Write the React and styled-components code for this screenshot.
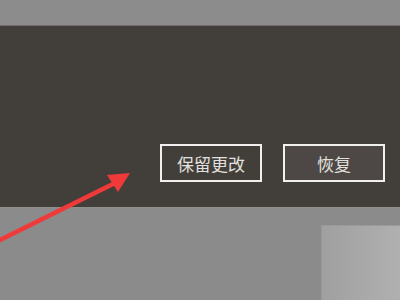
import React from "react";
import styled, { createGlobalStyle } from "styled-components";

const Global = createGlobalStyle`
  html, body { margin: 0; padding: 0; background: #8b8b8b; }
  body { font-family: "Noto Sans CJK SC", "Noto Sans", sans-serif; }
`;

const Page = styled.div`
  position: relative;
  width: 400px;
  height: 300px;
  overflow: hidden;
  display: flex;
  flex-direction: column;
  background: #8b8b8b;
`;

const TopBar = styled.div`
  height: 25px;
  background: #8c8c8c;
  border-bottom: 1px solid #6f6d6b;
`;

const Panel = styled.div`
  height: 182px;
  background: #423f3b;
  display: flex;
  align-items: flex-start;
  justify-content: flex-end;
  padding: 118px 15px 0 0;
  box-sizing: border-box;
  gap: 21px;
  border-bottom: 1px solid #8f8f8f;
`;

const Button = styled.div`
  width: 102px;
  height: 38px;
  box-sizing: border-box;
  border: 2px solid #f2f0ee;
  background: ${(p) => (p.$filled ? "#4d4845" : "#423f3b")};
  color: #e2e0dd;
  font-size: 17px;
  display: flex;
  align-items: center;
  justify-content: center;
  line-height: 1;
`;

const Lower = styled.div`
  flex: 1;
  display: flex;
  padding: 17px 0 0 321px;
`;

const Window = styled.div`
  flex: 1;
  background: linear-gradient(90deg, #a0a0a0 0%, #a6a6a6 40%, #b0b0b0 100%);
  border-left: 1px solid #999;
  border-top: 1px solid #9a9a9a;
`;

const Arrow = styled.svg`
  position: absolute;
  left: 0;
  top: 0;
  pointer-events: none;
`;

export default function App() {
  return (
    <>
      <Global />
      <Page>
        <TopBar />
        <Panel>
          <Button>保留更改</Button>
          <Button $filled>恢复</Button>
        </Panel>
        <Lower>
          <Window />
        </Lower>
        <Arrow width="400" height="300" viewBox="0 0 400 300">
          <line x1="-4" y1="242" x2="115" y2="183" stroke="#f03a3a" strokeWidth="4.5" />
          <polygon points="130,173 107,175 118,192" fill="#f03a3a" />
        </Arrow>
      </Page>
    </>
  );
}
